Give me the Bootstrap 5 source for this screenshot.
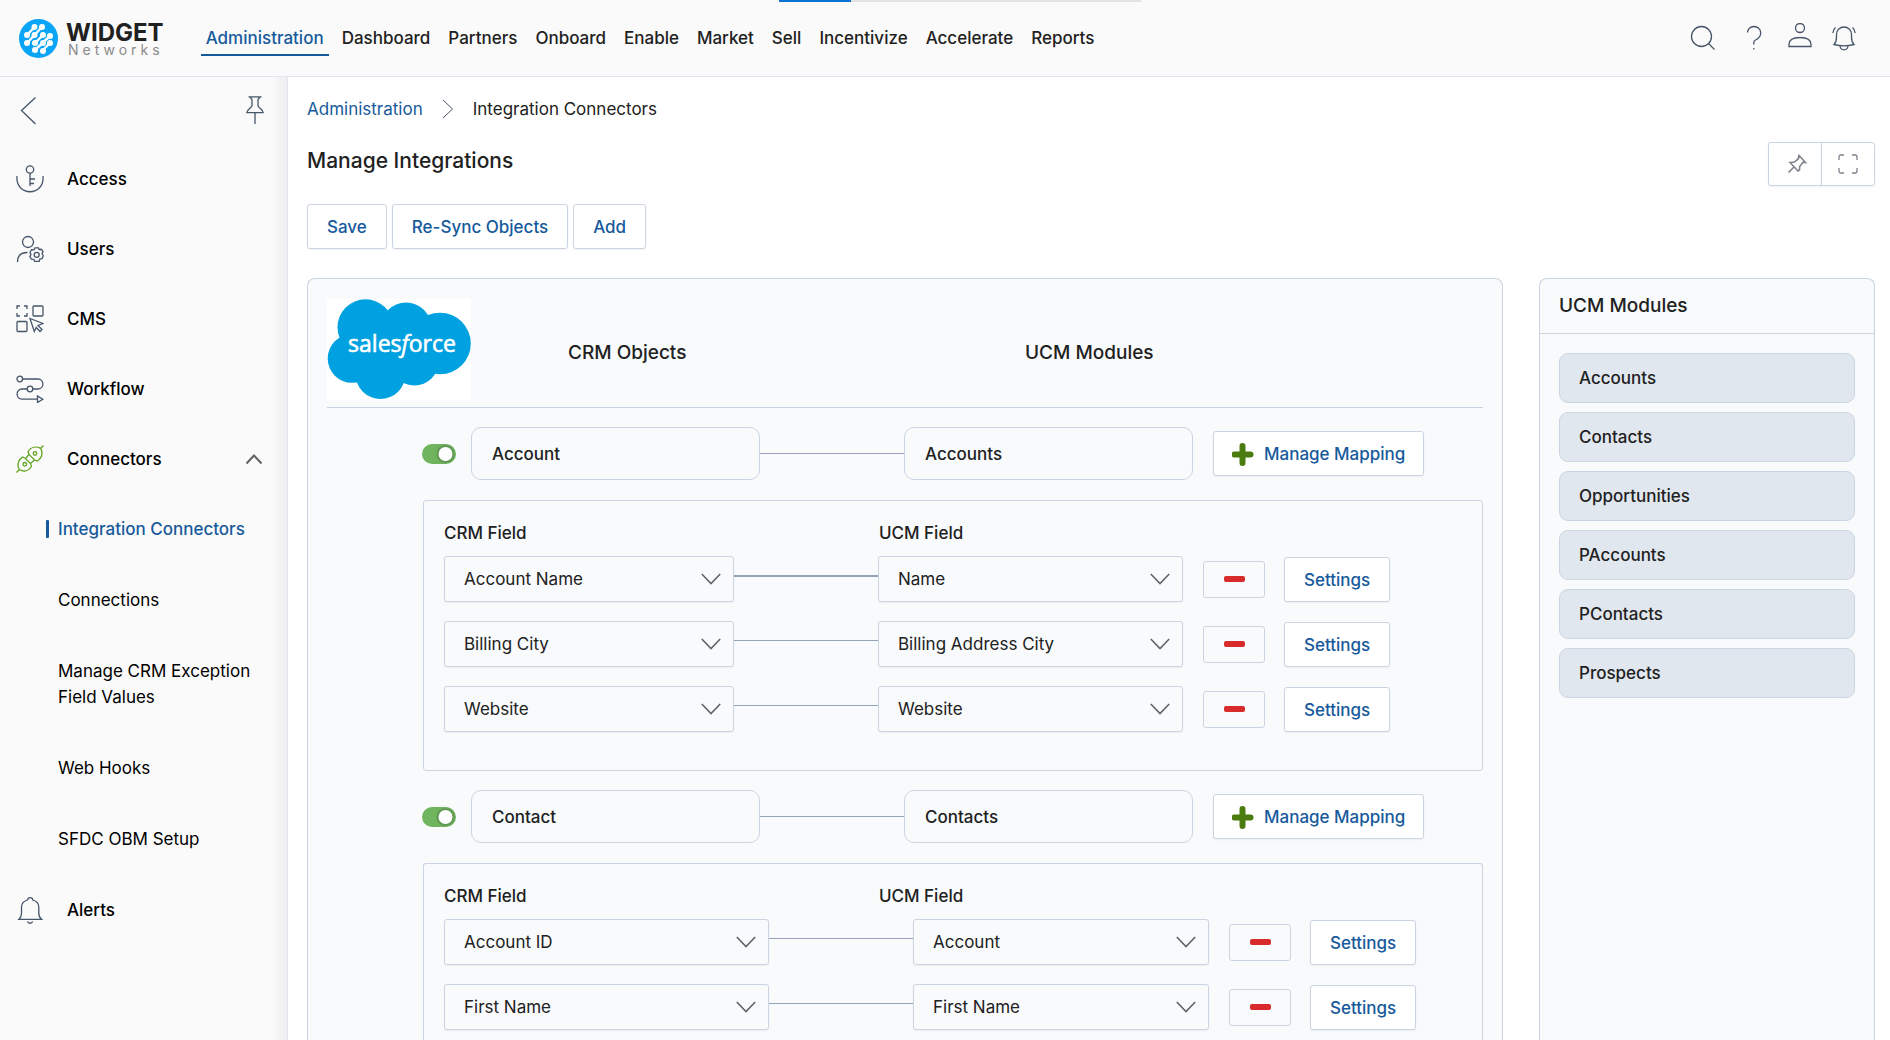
<!DOCTYPE html>
<html lang="en">
<head>
<meta charset="utf-8">
<meta name="viewport" content="width=device-width, initial-scale=1">
<title>Manage Integrations</title>
<link href="https://cdn.jsdelivr.net/npm/bootstrap@5.3.0/dist/css/bootstrap.min.css" rel="stylesheet">
<style>
:root { --brand:#175a9c; --line:#cbd5e1; --wire:#94a3b8; --panel:#f8fafc; }
body { font-family: Inter, "Liberation Sans", sans-serif; font-size: 17px; line-height: 26px; color: #212121; background: #fff; }
a { text-decoration: none; color: inherit; }
svg { flex: none; fill: none; stroke: #475569; stroke-width: 1.3; display: block; }

.topbar { height: 77px; background: #fafafa; border-bottom: 1px solid #dfe5ee; padding: 0 34px 0 19px; position: relative; }
.loader { position: absolute; top: 0; left: 50%; margin-left: -166px; width: 362px; height: 2px; border-radius: 0; background: #e3e3e3; }
.loader .progress-bar { background: #0972d3; }
.brand-name { font-weight: 700; font-size: 24px; line-height: 20px; color: #212121; }
.brand-sub { font-size: 14px; line-height: 14px; letter-spacing: 4px; color: #8a8a8a; padding-left: 2px; }
.mainnav { gap: 8px; margin-left: 37px; }
.mainnav a { font-weight: 500; padding: 5px 5px 3px; border-bottom: 2px solid transparent; }
.mainnav a.active { color: var(--brand); border-color: var(--brand); }
.plain { border: 0; background: none; padding: 0; }

.side { width: 288px; flex: none; background: linear-gradient(to left, #eeeeee, #fafafa 16px); border-right: 1px solid #dfe5ee; }
.side-head { height: 67px; padding: 18px 22px 0 19px; }
.side-item { height: 70px; padding: 0 24px 0 16px; gap: 23px; font-weight: 500; color: #000; }
.side-sub a { display: block; padding: 22px 30px 23px 58px; color: #000; }
.side-sub a.active { color: var(--brand); font-weight: 500; padding-left: 46px; display: flex; align-items: center; gap: 9px; }
.side-sub a.active::before { content: ""; width: 3px; height: 18px; background: var(--brand); border-radius: 1px; }

.page { padding: 19px 15px 0 19px; }
.crumbs { gap: 19px; }
.crumbs a, .act { color: var(--brand); }
.title-row { margin-top: 20px; }
h1 { font-size: 21px; line-height: 30px; font-weight: 500; margin: 0; padding-top: 4px; }
h2 { font-size: 19px; line-height: 28px; font-weight: 500; margin: 0; }
.act { background: #fff; border: 1px solid var(--line); border-radius: 3px; font-size: 17px; font-weight: 500; line-height: 25px; padding: 10px 19px 8px; box-shadow: 0 1px 2px rgba(15,23,42,.05); display: inline-flex; align-items: center; }
.act:hover { color: var(--brand); background: #f1f5f9; border-color: var(--line); }
.tools .act { width: 54px; height: 44px; padding: 0; justify-content: center; }
.tools svg { stroke: #7d828c; }
.actions { gap: 5px; margin-top: 18px; }

.panel { background: var(--panel); border: 1px solid var(--line); border-bottom: 0; border-radius: 8px 8px 0 0; }
.panel-gap { gap: 36px; margin-top: 29px; }
.crm { padding: 20px 19px 0; }
.crm-head { border-bottom: 1px solid var(--line); padding-bottom: 7px; }
.crm-head h2 { padding-top: 7px; }
.crm-head .first-col { margin-left: 97px; width: 457px; }
.maprow { margin: 19px 0 20px 95px; }
.objbox { width: 289px; height: 53px; padding: 14px 20px; border: 1px solid var(--line); border-radius: 10px; font-weight: 500; line-height: 25px; }
.wire { width: 144px; height: 1px; background: var(--wire); flex: none; }
.wire.thick { height: 2px; }
.wire-up { margin-bottom: 7px; }
.mapbtn { margin-left: 20px; padding-right: 18px; padding-left: 18px; }
.form-switch.toggle { padding: 0; margin: 0 15px 0 0; min-height: 0; width: 34px; height: 20px; }
.toggle .form-check-input, .toggle .form-check-input:checked { margin: 0; float: none; display: block; width: 34px; height: 20px; border: 0; border-radius: 10px; background-color: #70b55d; background-size: 20px 20px; background-position: right center;
 --bs-form-switch-bg: url("data:image/svg+xml,%3csvg xmlns='http://www.w3.org/2000/svg' viewBox='0 0 20 20'%3e%3ccircle cx='9.5' cy='10' r='9.5' fill='%23537f4a' opacity='.3'/%3e%3ccircle cx='9.5' cy='10' r='8.3' fill='%23537f4a' opacity='.4'/%3e%3ccircle cx='9.5' cy='10' r='7' fill='%23fff'/%3e%3c/svg%3e"); }
.mapbox { margin-left: 96px; border: 1px solid var(--line); border-radius: 3px; padding: 19px 19px 38px 20px; }
.mapbox.open { border-bottom: 0; border-radius: 3px 3px 0 0; }
.fieldnames { font-weight: 500; margin-bottom: 10px; }
.fieldnames span { width: 435px; }
.fieldrow { height: 46px; margin-bottom: 19px; }
.fieldrow:last-child { margin-bottom: 0; }
.fieldrow .form-select { height: 46px; flex: none; padding: 9px 40px 9px 19px; font-size: 17px; line-height: 26px; color: #212121; background-color: var(--panel); border: 1px solid var(--line); border-radius: 3px; box-shadow: 0 1px 2px rgba(15,23,42,.06); background-position: right 12px center; background-size: 20px 20px;
 --bs-form-select-bg-img: url("data:image/svg+xml,%3csvg xmlns='http://www.w3.org/2000/svg' viewBox='0 0 20 20'%3e%3cpath d='M.8 5l9.2 9.6L19.200 5' fill='none' stroke='%23646464' stroke-width='1.6'/%3e%3c/svg%3e"); }
.w-a1 { width: 290px; } .w-a2 { width: 305px; } .w-b1 { width: 325px; } .w-b2 { width: 296px; }
.del { width: 62px; height: 37px; margin: 0 19px 0 20px; background: var(--panel); border: 1px solid var(--line); border-radius: 3px; display: flex; align-items: center; justify-content: center; }
.del::before { content: ""; width: 21px; height: 6px; border-radius: 2px; background: #d92b2b; }

.modules { width: 336px; flex: none; }
.modules h2 { padding: 13px 19px; border-bottom: 1px solid var(--line); }
.modules ul { padding: 19px; gap: 9px; }
.modules li { height: 50px; padding: 12px 19px; line-height: 25px; background: #e1e7ef; border: 1px solid var(--line); border-radius: 9px; font-weight: 500; }
</style>
</head>
<body class="vh-100 overflow-hidden d-flex flex-column">

<header class="topbar d-flex align-items-center flex-shrink-0">
  <div class="progress loader" role="progressbar" aria-label="Loading"><div class="progress-bar" style="width:20%"></div></div>
  <a href="#" class="d-flex align-items-center gap-2">
    <svg width="39" height="39" viewBox="0 0 39 39" stroke="none"><circle cx="19.500" cy="19.500" r="19.500" fill="#0aa5f7" stroke="none"/>
      <g stroke="#fff" stroke-width="2.4"><path d="M8 16L15.500 8M8 24L23 8M16 24L24 16M16 31L31 17M24 31L31 24"/></g>
      <g fill="#fff" stroke="none"><circle cx="15.500" cy="8" r="3"/><circle cx="23" cy="8" r="3"/><circle cx="8" cy="16" r="3"/><circle cx="15.500" cy="16" r="3"/><circle cx="24" cy="16" r="3"/><circle cx="31" cy="17" r="3"/><circle cx="8" cy="24" r="3"/><circle cx="16" cy="24" r="3"/><circle cx="24" cy="24" r="3"/><circle cx="31" cy="24" r="3"/><circle cx="16" cy="31" r="3"/><circle cx="24" cy="32" r="3"/></g></svg>
    <span class="d-flex flex-column pt-1"><span class="brand-name">WIDGET</span><span class="brand-sub">Networks</span></span>
  </a>
  <nav class="mainnav d-flex" aria-label="Main">
    <a href="#" class="active">Administration</a><a href="#">Dashboard</a><a href="#">Partners</a><a href="#">Onboard</a><a href="#">Enable</a><a href="#">Market</a><a href="#">Sell</a><a href="#">Incentivize</a><a href="#">Accelerate</a><a href="#">Reports</a>
  </nav>
  <div class="d-flex ms-auto align-items-center">
    <button class="plain" aria-label="Search"><svg width="26" height="26" viewBox="0 0 26 26"><circle cx="11.500" cy="11.500" r="10"/><path d="M18.500 18.500l6 6"/></svg></button>
    <button class="plain ms-4 me-2" aria-label="Help"><svg width="24" height="26" viewBox="0 0 24 26"><path d="M7.500 7.500C7.500 4 10.500 1.500 14 1.500s6.700 2.500 6.700 6.200c0 4-2.200 6-5.200 7.300-1.300.6-1.700 1.200-1.700 2.500v2M13.800 23v1.500"/></svg></button>
    <button class="plain ms-3 mb-1" aria-label="Profile"><svg width="24" height="26" viewBox="0 0 24 26"><circle cx="12" cy="5" r="4.500"/><path d="M1 23.500v-2c0-5 4.500-7 11-7s11 2 11 7v2z"/></svg></button>
    <button class="plain ms-3 ps-1" aria-label="Notifications"><svg width="24" height="26" viewBox="0 0 24 26"><path d="M2 19.500c2-2 2.500-4 2.500-7.500V9.500C4.500 5 8 2 12 2s7.500 3 7.500 7.500V12c0 3.500.5 5.500 2.500 7.500-6 1.600-14 1.600-20 0zM8 21c.3 2.400 1.800 3.800 4 3.800s3.700-1.400 4-3.800M.8 8C1.200 5.500 2 3.800 3.500 2.500M23.200 8c-.4-2.500-1.200-4.200-2.700-5.500"/></svg></button>
  </div>
</header>

<div class="d-flex flex-grow-1 overflow-hidden">
  <aside class="side">
    <div class="side-head d-flex justify-content-between align-items-start">
      <button class="plain" aria-label="Back"><svg width="18" height="30" viewBox="0 0 18 30"><path d="M16.500 2.500L2.500 15.500l14 13.500"/></svg></button>
      <button class="plain" aria-label="Pin menu"><svg width="20" height="30" viewBox="0 0 20 30"><path d="M3.500 1.800h13M5 1.800c.3 1.400 2 1.700 2 3.200v5.500c0 2.300-5 3.500-5.200 7.200h16.400c-.2-3.700-5.200-4.900-5.200-7.200V5c0-1.500 1.700-1.800 2-3.200M10 17.700V29"/></svg></button>
    </div>
    <nav aria-label="Administration">
      <a href="#" class="side-item d-flex align-items-center"><svg width="28" height="28" viewBox="0 0 28 28"><circle cx="14" cy="4.500" r="3.700"/><path d="M14 8.200V21M14 14h5M14 18.500h4M1 11c-2 21 28 21 26 0"/></svg>Access</a>
      <a href="#" class="side-item d-flex align-items-center"><svg width="28" height="28" viewBox="0 0 28 28"><circle cx="12" cy="7" r="5.500"/><path d="M1.500 27c0-7 3.500-9.500 10-9.500"/><circle cx="20.700" cy="19.800" r="2.500"/><path d="M19 12.800h3.500l.6 1.700 2.300-.2 1.700 2.500-1 1.900 1.200 2.100-1.300 2.800-2 .2-.8 2.500h-4.500l-.9-2-2.400-.2-1.600-2.700 1.200-2-1-2 1.500-2.700 2.500.1z"/></svg>Users</a>
      <a href="#" class="side-item d-flex align-items-center"><svg width="28" height="28" viewBox="0 0 28 28"><path d="M1 4V1h3M8 1h3v3M11 8v3H8M4 11H1V8"/><rect x="17" y="1" width="10" height="10" rx="1"/><rect x="1" y="16.500" width="10" height="10" rx="1"/><path d="M14 13.500l13 5-5 2 4 4-2 2-3.700-4-2 4z"/></svg>CMS</a>
      <a href="#" class="side-item d-flex align-items-center"><svg width="28" height="28" viewBox="0 0 28 28"><circle cx="3.800" cy="4" r="2.800"/><circle cx="14" cy="14" r="2.800"/><path d="M6.600 4H22c6.500 0 6.500 10 0 10h-5.200M11.200 14H6c-6.500 0-6.500 10.200 0 10.200h15.500M21.500 21v6.500l5.300-3.300z"/></svg>Workflow</a>
      <a href="#" class="side-item d-flex align-items-center"><svg width="28" height="28" viewBox="0 0 28 28" style="stroke:#62a420"><path d="M.5 27.500l3-3M24.500 3.500l3-3M3.300 24.700C1 20 1.800 15.500 6.500 12l3 1.500 5 5 1 3c-3 4.500-7.500 5.500-12.200 3.200zM24.700 3.300C27 8 26.200 12.500 21.500 16l-3-1-5.500-5.500-1-3c3-4.500 8-5.500 12.700-3.200zM9.500 13.500l3.500-4M14.500 18.500l4-3.500"/><circle cx="8.800" cy="19.300" r="1.800"/><circle cx="19" cy="8.500" r="1.800"/></svg>Connectors
        <svg class="ms-auto" width="18" height="12" viewBox="0 0 18 12" style="stroke:#616161;stroke-width:2"><path d="M1.500 10.500L9 2.500l7.500 8"/></svg></a>
      <div class="side-sub">
        <a href="#" class="active">Integration Connectors</a>
        <a href="#">Connections</a>
        <a href="#">Manage CRM Exception Field Values</a>
        <a href="#">Web Hooks</a>
        <a href="#">SFDC OBM Setup</a>
      </div>
      <a href="#" class="side-item d-flex align-items-center"><svg width="28" height="28" viewBox="0 0 28 28"><path d="M3 23.300c2-1.800 2.500-3.300 2.500-6V11c0-3.500 2.500-6 6-7 .3-3.300 5-3.300 5.300 0 3.500 1 6 3.500 6 7v6.300c0 2.700.4 4.200 2.700 6zM11.500 25.500c.8 2.300 4.300 2.300 5.200 0"/></svg>Alerts</a>
    </nav>
  </aside>

  <main class="page d-flex flex-column flex-grow-1">
    <nav class="crumbs d-flex align-items-center" aria-label="Breadcrumb">
      <a href="#">Administration</a>
      <svg width="12" height="20" viewBox="0 0 12 20" style="stroke-width:1"><path d="M1 1l9.500 9L1 19"/></svg>
      <span aria-current="page">Integration Connectors</span>
    </nav>
    <div class="title-row d-flex justify-content-between">
      <h1>Manage Integrations</h1>
      <div class="btn-group tools" role="group" aria-label="View">
        <button class="btn act" aria-label="Pin"><svg class="ms-1" width="20" height="20" viewBox="0 0 20 20"><path stroke-width="1.600" d="M1.500 18.500L7 13M3 8.500l8 8.500 1.500-1 .2-3.500 3.300-4.200 2.500.2-6.500-7-.7 3.200L7.500 8z"/></svg></button>
        <button class="btn act" aria-label="Full screen"><svg width="20" height="20" viewBox="0 0 20 20"><path d="M1 6V3q0-2 2-2h3M14 1h3q2 0 2 2v3M19 14v3q0 2-2 2h-3M6 19H3q-2 0-2-2v-3"/></svg></button>
      </div>
    </div>
    <div class="actions d-flex">
      <button class="btn act">Save</button><button class="btn act">Re-Sync Objects</button><button class="btn act">Add</button>
    </div>

    <div class="panel-gap d-flex flex-grow-1">
      <section class="panel crm d-flex flex-column flex-grow-1">
        <div class="crm-head d-flex align-items-center">
          <svg width="144" height="101" viewBox="0 0 144 101" role="img" aria-label="salesforce">
            <rect width="144" height="101" fill="#fff" stroke="none"/>
            <g fill="#00a1e0" stroke="none"><circle cx="38.500" cy="28.300" r="28"/><circle cx="79" cy="29" r="25.500"/><circle cx="113" cy="44.500" r="30.800"/><circle cx="87.500" cy="62.500" r="24"/><circle cx="53.500" cy="75" r="25"/><circle cx="25" cy="59.500" r="24.300"/><path d="M20 40h90v30H25z"/></g>
            <text x="75" y="53" text-anchor="middle" font-family="Open Sans" font-size="23" fill="#fff" style="stroke:#fff;stroke-width:.6">sales<tspan font-style="italic">f</tspan>orce</text>
          </svg>
          <h2 class="first-col">CRM Objects</h2><h2>UCM Modules</h2>
        </div>

        <div class="maprow d-flex align-items-center">
          <div class="form-check form-switch toggle"><input class="form-check-input" type="checkbox" role="switch" checked aria-label="Account mapping"></div>
          <div class="objbox">Account</div><div class="wire"></div><div class="objbox">Accounts</div>
          <button class="btn act mapbtn"><svg class="me-1" width="28" height="24" viewBox="0 0 28 24"><path d="M10.500 3v17M2.500 11.500h16" stroke="#4a7c10" stroke-width="6" stroke-linecap="round"/></svg>Manage Mapping</button>
        </div>
        <div class="mapbox">
          <div class="fieldnames d-flex"><span>CRM Field</span><span>UCM Field</span></div>
          <div class="fieldrow d-flex align-items-center">
            <select class="form-select w-a1" aria-label="CRM field"><option>Account Name</option></select><div class="wire thick wire-up"></div>
            <select class="form-select w-a2" aria-label="UCM field"><option>Name</option></select>
            <button class="del" aria-label="Remove"></button><button class="btn act">Settings</button>
          </div>
          <div class="fieldrow d-flex align-items-center">
            <select class="form-select w-a1" aria-label="CRM field"><option>Billing City</option></select><div class="wire wire-up"></div>
            <select class="form-select w-a2" aria-label="UCM field"><option>Billing Address City</option></select>
            <button class="del" aria-label="Remove"></button><button class="btn act">Settings</button>
          </div>
          <div class="fieldrow d-flex align-items-center">
            <select class="form-select w-a1" aria-label="CRM field"><option>Website</option></select><div class="wire wire-up"></div>
            <select class="form-select w-a2" aria-label="UCM field"><option>Website</option></select>
            <button class="del" aria-label="Remove"></button><button class="btn act">Settings</button>
          </div>
        </div>

        <div class="maprow d-flex align-items-center">
          <div class="form-check form-switch toggle"><input class="form-check-input" type="checkbox" role="switch" checked aria-label="Contact mapping"></div>
          <div class="objbox">Contact</div><div class="wire"></div><div class="objbox">Contacts</div>
          <button class="btn act mapbtn"><svg class="me-1" width="28" height="24" viewBox="0 0 28 24"><path d="M10.500 3v17M2.500 11.500h16" stroke="#4a7c10" stroke-width="6" stroke-linecap="round"/></svg>Manage Mapping</button>
        </div>
        <div class="mapbox open flex-grow-1">
          <div class="fieldnames d-flex"><span>CRM Field</span><span>UCM Field</span></div>
          <div class="fieldrow d-flex align-items-center">
            <select class="form-select w-b1" aria-label="CRM field"><option>Account ID</option></select><div class="wire wire-up"></div>
            <select class="form-select w-b2" aria-label="UCM field"><option>Account</option></select>
            <button class="del" aria-label="Remove"></button><button class="btn act">Settings</button>
          </div>
          <div class="fieldrow d-flex align-items-center">
            <select class="form-select w-b1" aria-label="CRM field"><option>First Name</option></select><div class="wire wire-up"></div>
            <select class="form-select w-b2" aria-label="UCM field"><option>First Name</option></select>
            <button class="del" aria-label="Remove"></button><button class="btn act">Settings</button>
          </div>
        </div>
      </section>

      <aside class="panel modules">
        <h2>UCM Modules</h2>
        <ul class="list-unstyled d-flex flex-column m-0">
          <li>Accounts</li><li>Contacts</li><li>Opportunities</li><li>PAccounts</li><li>PContacts</li><li>Prospects</li>
        </ul>
      </aside>
    </div>
  </main>
</div>
<script src="https://cdn.jsdelivr.net/npm/bootstrap@5.3.0/dist/js/bootstrap.bundle.min.js"></script>
</body>
</html>
